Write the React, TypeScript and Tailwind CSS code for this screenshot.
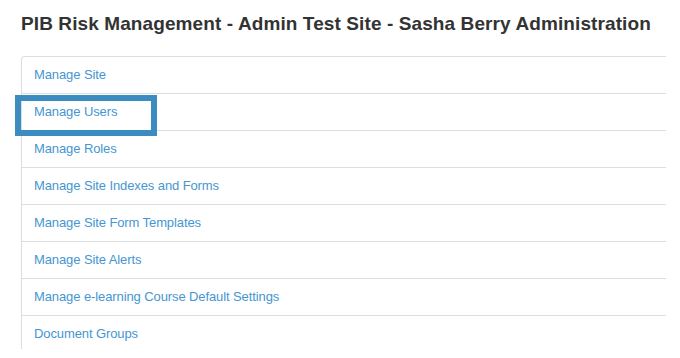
const LINKS = [
  'Manage Site',
  'Manage Users',
  'Manage Roles',
  'Manage Site Indexes and Forms',
  'Manage Site Form Templates',
  'Manage Site Alerts',
  'Manage e-learning Course Default Settings',
  'Document Groups',
];

export default function App() {
  return (
    <div className="relative h-[358px] w-[680px] overflow-hidden bg-white font-['Liberation_Sans',Arial,sans-serif]">
      <h1 className="pl-[21px] pt-[13px] text-[19px] font-bold leading-[22px] tracking-[0.1px] text-[#333]">
        PIB Risk Management - Admin Test Site - Sasha Berry Administration
      </h1>
      <div className="ml-[21px] mt-[21px] h-[293px] w-[645px] overflow-hidden rounded-tl-[4px] border-l border-t border-[#ddd]">
        {LINKS.map((label) => (
          <div key={label} className="flex h-[37px] items-center border-b border-[#ddd] pl-[12px]">
            <a href="#" className="text-[13px] tracking-[-0.1px] text-[#4596d2]">
              {label}
            </a>
          </div>
        ))}
      </div>
      {/* highlight around Manage Users */}
      <div className="absolute left-[15px] top-[95px] h-[41px] w-[142px] border-[6px] border-[#3a8cc1]" />
    </div>
  );
}
